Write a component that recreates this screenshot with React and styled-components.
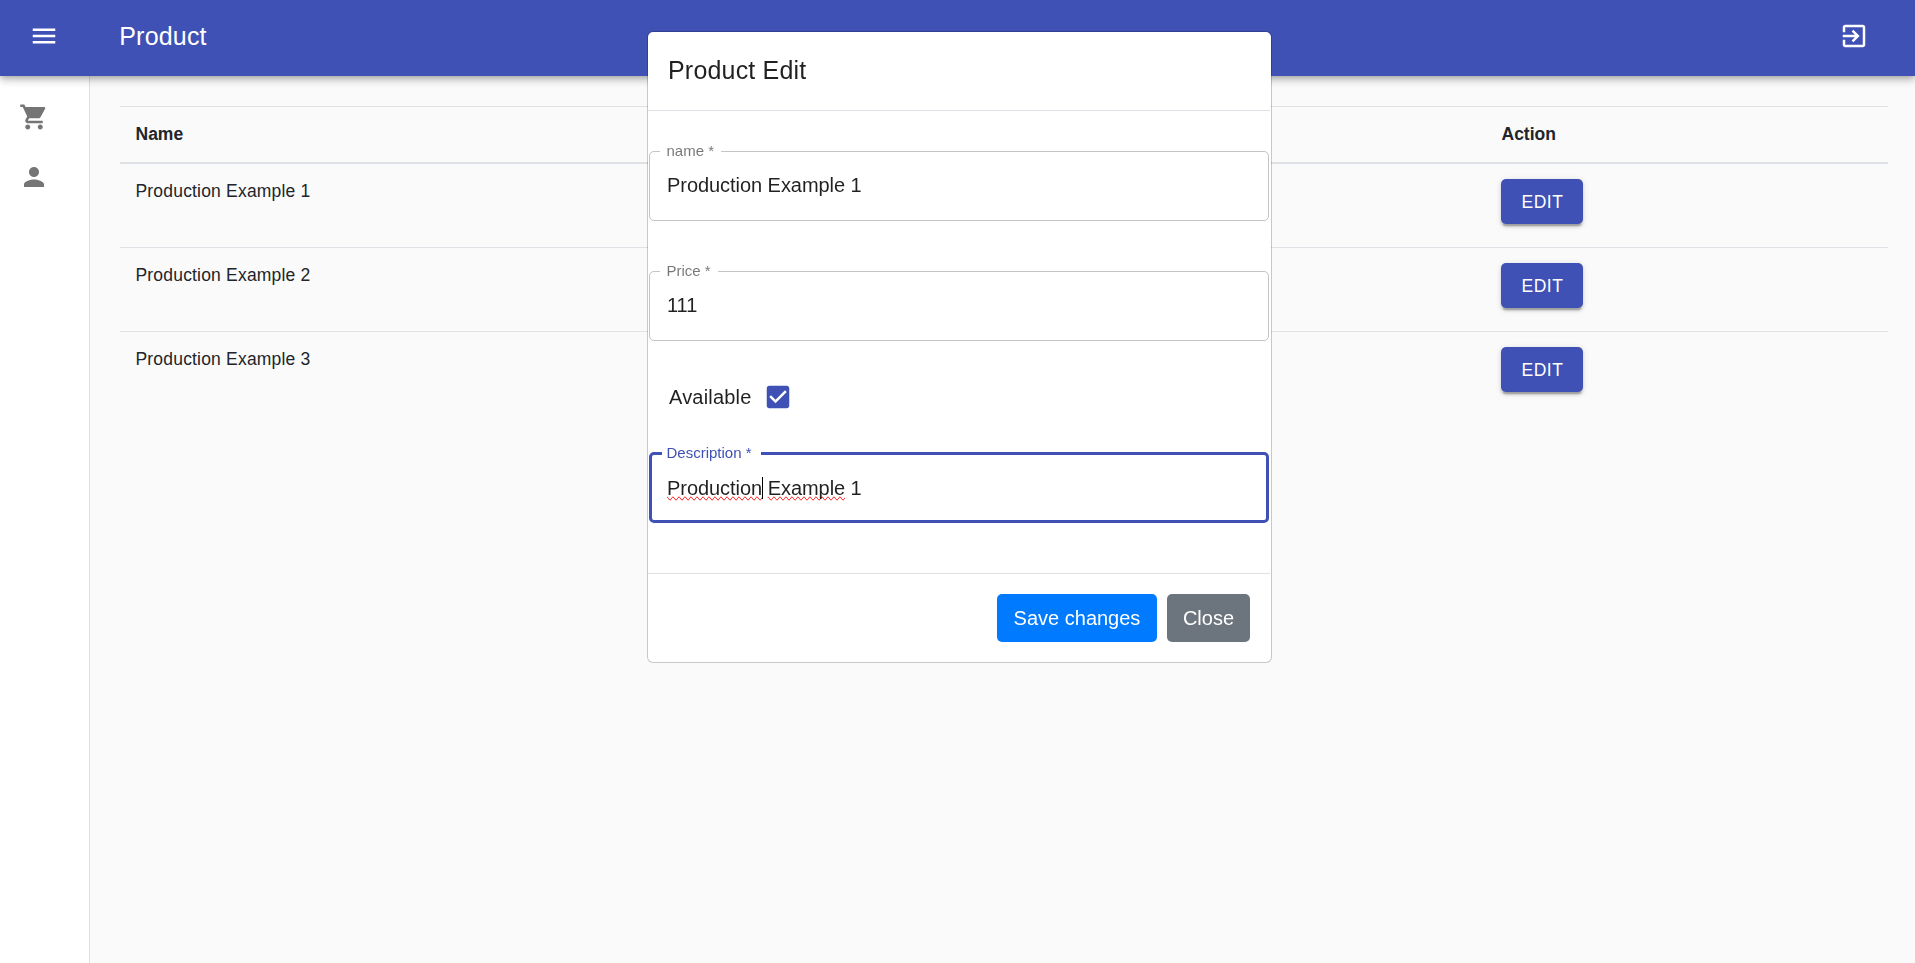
import React from "react";
import styled, { createGlobalStyle } from "styled-components";

const GlobalStyle = createGlobalStyle`
  *, *::before, *::after { box-sizing: border-box; }
  html, body, #root { height: 100%; }
  body {
    margin: 0;
    overflow: hidden;
    background: #fafafa;
    color: #212529;
    font-family: "Liberation Sans", Arial, sans-serif;
    font-size: 17.5px;
    line-height: 1.5;
  }
`;

const Page = styled.div`
  display: flex;
  flex-direction: column;
  height: 100vh;
`;

const AppBar = styled.header`
  position: relative;
  z-index: 2;
  flex: none;
  display: flex;
  align-items: center;
  height: 76px;
  padding: 0 46px 4px 28.75px;
  background: #3f51b5;
  color: #fff;
  box-shadow: 0 2.5px 5px -1.25px rgba(0, 0, 0, 0.2),
    0 5px 6.25px 0 rgba(0, 0, 0, 0.14), 0 1.25px 12.5px 0 rgba(0, 0, 0, 0.12);
`;

const AppTitle = styled.h1`
  flex: 1;
  margin: 0 0 0 60.5px;
  font-size: 25px;
  font-weight: 400;
  line-height: 40px;
  letter-spacing: 0.0075em;
`;

const Icon = styled.svg`
  display: block;
  flex: none;
  width: 30px;
  height: 30px;
  fill: currentColor;
`;

const Body = styled.div`
  flex: 1;
  display: flex;
  min-height: 0;
`;

const Sidebar = styled.nav`
  flex: none;
  display: flex;
  flex-direction: column;
  gap: 30px;
  width: 90px;
  padding: 26px 0 0 18.75px;
  background: #fff;
  color: #757575;
  border-right: 1px solid #e0e0e0;
`;

const Content = styled.main`
  flex: 1;
  padding: 30px 27px 0 30px;
`;

const Table = styled.table`
  width: 100%;
  table-layout: fixed;
  border-collapse: separate;
  border-spacing: 0;
`;

const HeadCell = styled.th`
  width: ${(p) => p.$width || "auto"};
  height: 58px;
  padding: 14px 15px 15px 15.5px;
  text-align: left;
  vertical-align: top;
  line-height: 26px;
  border-top: 1px solid #dee2e6;
  border-bottom: 2px solid #dee2e6;
`;

const Cell = styled.td`
  height: 84px;
  padding: ${(p) => (p.$text ? "14px 15px 15px 15.5px" : "15px")};
  vertical-align: top;
  line-height: 26px;
  letter-spacing: 0.01071em;
  border-bottom: 1px solid ${(p) => (p.$last ? "transparent" : "#dee2e6")};
`;

const EditButton = styled.button`
  display: block;
  width: 82px;
  height: 45px;
  padding: 0 0 0 1px;
  border: 0;
  border-radius: 5px;
  background: #3f51b5;
  color: #fff;
  font: 400 17.5px/30px "Liberation Sans", Arial, sans-serif;
  letter-spacing: 0.02857em;
  text-transform: uppercase;
  box-shadow: 0 3.75px 1.25px -2.5px rgba(0, 0, 0, 0.2),
    0 2.5px 2.5px 0 rgba(0, 0, 0, 0.14), 0 1.25px 6.25px 0 rgba(0, 0, 0, 0.12);
`;

const Overlay = styled.div`
  position: fixed;
  inset: 0;
  z-index: 10;
  display: flex;
  align-items: flex-start;
  padding: 31px 0 0 647px;
`;

const Modal = styled.section`
  display: flex;
  flex-direction: column;
  width: 625px;
  height: 632px;
  background: #fff;
  background-clip: padding-box;
  border: 1px solid rgba(0, 0, 0, 0.2);
  border-radius: 6px;
  color: rgba(0, 0, 0, 0.87);
`;

const ModalHeader = styled.div`
  flex: none;
  height: 79px;
  margin-right: 1px;
  padding: 18px 20px;
  border-bottom: 1px solid #dee2e6;
`;

const ModalTitle = styled.h2`
  margin: 0;
  font-size: 25px;
  font-weight: 400;
  line-height: 40px;
  letter-spacing: 0.0075em;
`;

const ModalForm = styled.div`
  flex: 1;
  display: flex;
  flex-direction: column;
  padding: 29px 2px 0 1px;
`;

const Field = styled.fieldset`
  flex: none;
  height: 81px;
  min-width: 0;
  margin: 0 0 39px;
  padding: 0 ${(p) => (p.$focused ? 15 : 17)}px;
  padding-left: ${(p) => (p.$focused ? 10 : 11)}px;
  border: ${(p) => (p.$focused ? "3px solid #3f51b5" : "1px solid rgba(0, 0, 0, 0.23)")};
  border-radius: 5px;
`;

const FieldLabel = styled.legend`
  height: 23px;
  width: ${(p) => p.$width}px;
  margin-left: ${(p) => (p.$focused ? 0 : -1)}px;
  padding: 0 0 0 ${(p) => (p.$focused ? 4.5 : 6.5)}px;
  white-space: nowrap;
  font-size: 15px;
  line-height: 22px;
  color: ${(p) => (p.$focused ? "#3f51b5" : "rgba(0, 0, 0, 0.54)")};
`;

const FieldValue = styled.div`
  display: flex;
  align-items: center;
  height: 24px;
  margin-top: ${(p) => (p.$focused ? 11 : 10)}px;
  padding-left: ${(p) => (p.$focused ? 5 : 6)}px;
  font-size: 20px;
  line-height: 24px;
  letter-spacing: -0.05px;
  white-space: pre;
`;

const Misspelled = styled.span`
  text-decoration-line: spelling-error;
`;

const Caret = styled.span`
  width: 1px;
  height: 22px;
  margin-right: -1px;
  background: #000;
`;

const CheckRow = styled.label`
  flex: none;
  display: flex;
  align-items: center;
  gap: 11px;
  height: 30px;
  margin: 2px 0 30px;
  padding-left: 20px;
  font-size: 20px;
  letter-spacing: 0.00938em;
`;

const CheckIcon = styled(Icon)`
  color: #3f51b5;
`;

const ModalFooter = styled.div`
  flex: none;
  display: flex;
  justify-content: flex-end;
  gap: 10px;
  height: 89px;
  margin-right: 1px;
  padding: 20px;
  border-top: 1px solid #dee2e6;
`;

const FooterButton = styled.button`
  width: ${(p) => p.$width}px;
  height: 48px;
  padding: 0;
  border: 0;
  border-radius: 5px;
  background: ${(p) => (p.$primary ? "#007bff" : "#6c757d")};
  color: #fff;
  font: 400 20px/30px "Liberation Sans", Arial, sans-serif;
`;

const paths = {
  menu: "M3 18h18v-2H3v2zm0-5h18v-2H3v2zm0-7v2h18V6H3z",
  cart: "M7 18c-1.1 0-1.99.9-1.99 2S5.900 22 7 22s2-.9 2-2-.9-2-2-2zM1 2v2h2l3.600 7.590-1.350 2.450c-.16.28-.25.61-.25.960 0 1.100.9 2 2 2h12v-2H7.420c-.14 0-.25-.11-.25-.25l.03-.12.9-1.630h7.450c.75 0 1.410-.41 1.750-1.030l3.580-6.490c.08-.14.12-.31.12-.480 0-.55-.45-1-1-1H5.210l-.94-2H1zm16 16c-1.100 0-1.990.9-1.990 2s.89 2 1.990 2 2-.9 2-2-.9-2-2-2z",
  person: "M12 12c2.210 0 4-1.790 4-4s-1.790-4-4-4-4 1.790-4 4 1.790 4 4 4zm0 2c-2.670 0-8 1.340-8 4v2h16v-2c0-2.660-5.330-4-8-4z",
  exit: "M10.090 15.590L11.500 17l5-5-5-5-1.410 1.410L12.670 11H3v2h9.670l-2.580 2.590zM19 3H5c-1.110 0-2 .9-2 2v4h2V5h14v14H5v-4H3v4c0 1.100.89 2 2 2h14c1.100 0 2-.9 2-2V5c0-1.100-.9-2-2-2z",
  check: "M19 3H5c-1.110 0-2 .9-2 2v14c0 1.100.89 2 2 2h14c1.110 0 2-.9 2-2V5c0-1.100-.89-2-2-2zm-9 14l-5-5 1.410-1.410L10 14.170l7.590-7.590L19 8l-9 9z",
};

const Glyph = ({ name, as: Base = Icon }) => (
  <Base viewBox="0 0 24 24" aria-hidden="true">
    <path d={paths[name]} />
  </Base>
);

const products = ["Production Example 1", "Production Example 2", "Production Example 3"];

function TextField({ label, labelWidth, focused, children }) {
  return (
    <Field $focused={focused}>
      <FieldLabel $width={labelWidth} $focused={focused}>
        {label} *
      </FieldLabel>
      <FieldValue $focused={focused}>{children}</FieldValue>
    </Field>
  );
}

export default function App() {
  return (
    <Page>
      <GlobalStyle />
      <AppBar>
        <Glyph name="menu" />
        <AppTitle>Product</AppTitle>
        <Glyph name="exit" />
      </AppBar>
      <Body>
        <Sidebar>
          <Glyph name="cart" />
          <Glyph name="person" />
        </Sidebar>
        <Content>
          <Table>
            <thead>
              <tr>
                <HeadCell>Name</HeadCell>
                <HeadCell $width="402px">Action</HeadCell>
              </tr>
            </thead>
            <tbody>
              {products.map((product, i) => (
                <tr key={product}>
                  <Cell $text $last={i === products.length - 1}>
                    {product}
                  </Cell>
                  <Cell $last={i === products.length - 1}>
                    <EditButton>Edit</EditButton>
                  </Cell>
                </tr>
              ))}
            </tbody>
          </Table>
        </Content>
      </Body>
      <Overlay>
        <Modal>
          <ModalHeader>
            <ModalTitle>Product Edit</ModalTitle>
          </ModalHeader>
          <ModalForm>
            <TextField label="name" labelWidth={61}>
              Production Example 1
            </TextField>
            <TextField label="Price" labelWidth={58}>
              111
            </TextField>
            <CheckRow>
              Available
              <Glyph name="check" as={CheckIcon} />
            </CheckRow>
            <TextField label="Description" labelWidth={99} focused>
              <Misspelled>Production</Misspelled>
              <Caret />
              <span> </span>
              <Misspelled>Example</Misspelled>
              <span> 1</span>
            </TextField>
          </ModalForm>
          <ModalFooter>
            <FooterButton $width={160} $primary>
              Save changes
            </FooterButton>
            <FooterButton $width={83}>Close</FooterButton>
          </ModalFooter>
        </Modal>
      </Overlay>
    </Page>
  );
}
